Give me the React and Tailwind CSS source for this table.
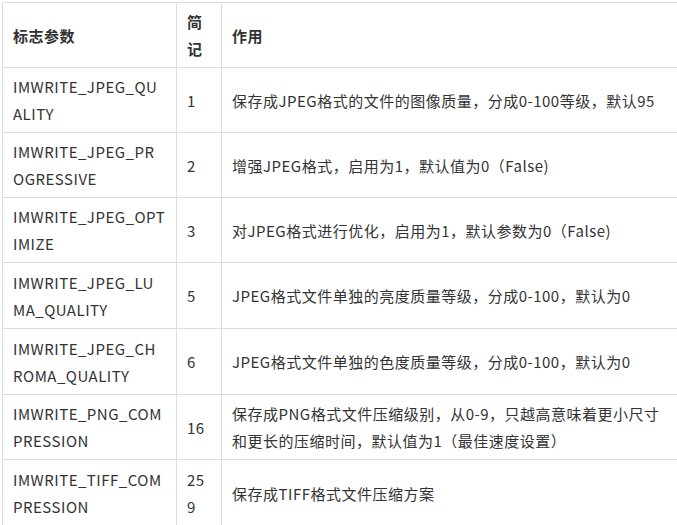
const rows = [
  ["IMWRITE_JPEG_QUALITY", "1", "保存成JPEG格式的文件的图像质量，分成0-100等级，默认95", "h-[65px]"],
  ["IMWRITE_JPEG_PROGRESSIVE", "2", "增强JPEG格式，启用为1，默认值为0（False)", "h-[65px]"],
  ["IMWRITE_JPEG_OPTIMIZE", "3", "对JPEG格式进行优化，启用为1，默认参数为0（False)", "h-[65px]"],
  ["IMWRITE_JPEG_LUMA_QUALITY", "5", "JPEG格式文件单独的亮度质量等级，分成0-100，默认为0", "h-[66px]"],
  ["IMWRITE_JPEG_CHROMA_QUALITY", "6", "JPEG格式文件单独的色度质量等级，分成0-100，默认为0", "h-[66px]"],
  ["IMWRITE_PNG_COMPRESSION", "16", "保存成PNG格式文件压缩级别，从0-9，只越高意味着更小尺寸和更长的压缩时间，默认值为1（最佳速度设置）", "h-[65px]"],
  ["IMWRITE_TIFF_COMPRESSION", "259", "保存成TIFF格式文件压缩方案", "h-[67px]"],
];

export default function App() {
  const cell = "border border-[#dddddd] py-[5px] align-middle";
  return (
    <div
      className="w-[677px] h-[525px] overflow-hidden bg-white pl-[2px] pt-[2px] text-[15px] leading-[27px] tracking-[0.5px] text-[#333333]"
      style={{ fontFamily: '"Noto Sans CJK SC", "Noto Sans", sans-serif' }}
    >
      <table className="table-fixed border-collapse w-[681px]">
        <colgroup>
          <col className="w-[174px]" />
          <col className="w-[45px]" />
          <col />
        </colgroup>
        <thead>
          <tr className="h-[65px]">
            <th className={`${cell} pl-[10px] pr-[10.5px] text-left font-bold break-all`}>标志参数</th>
            <th className={`${cell} px-[10px] text-left font-bold break-all`}>简记</th>
            <th className={`${cell} px-[10px] text-left font-bold`}>作用</th>
          </tr>
        </thead>
        <tbody>
          {rows.map((r) => (
            <tr key={r[0]} className={r[3]}>
              <td className={`${cell} pl-[10px] pr-[10.5px] break-all`}>{r[0]}</td>
              <td className={`${cell} px-[10px] break-all`}>{r[1]}</td>
              <td className={`${cell} px-[10px]`}>{r[2]}</td>
            </tr>
          ))}
        </tbody>
      </table>
    </div>
  );
}
